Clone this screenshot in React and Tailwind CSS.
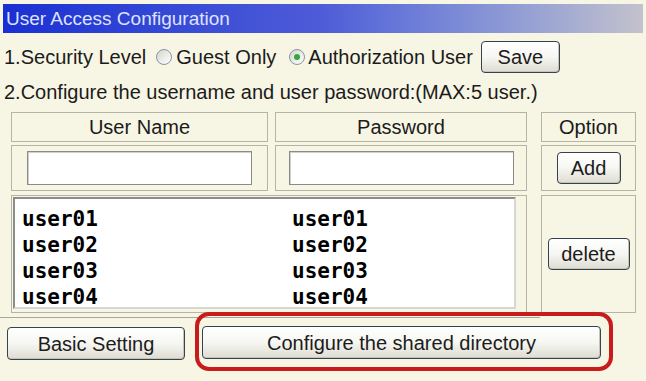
import React from "react";

const users = [
  { name: "user01", pass: "user01" },
  { name: "user02", pass: "user02" },
  { name: "user03", pass: "user03" },
  { name: "user04", pass: "user04" },
];

const XpButton = ({ children, className = "" }) => (
  <button
    className={`border border-[#34414f] rounded-[4px] bg-gradient-to-b from-white via-[#f6f6f2] to-[#dedcd2] text-[#1c1c1c] text-[20px] leading-none shadow-[inset_-1px_-1px_0_#c6c4b8] ${className}`}
  >
    {children}
  </button>
);

const Radio = ({ checked }) => (
  <span className="w-[16px] h-[16px] rounded-full border border-[#8596a6] bg-gradient-to-br from-[#d6d6ce] to-white flex items-center justify-center">
    {checked && <span className="w-[6px] h-[6px] rounded-full bg-[#3aa53a]" />}
  </span>
);

const cell = "border border-[#b6b4a4] flex items-center justify-center";

export default function App() {
  return (
    <div className="w-[646px] h-[381px] overflow-hidden bg-[#f7f5e4] text-[#1b1b1b] font-['Liberation_Sans',Arial,sans-serif]">
      <div className="mx-[3px] mt-[4px] h-[29px] pl-[3px] bg-gradient-to-r from-[#1a2fd2] via-[#4f5cd8] to-[#c3c2cc] text-[#dfe2ff] text-[19px] leading-[29px]">
        User Access Configuration
      </div>

      <div className="mt-[8px] h-[32px] pl-[4px] flex items-center text-[20px]">
        <span>1.Security Level</span>
        <span className="ml-[10px]">
          <Radio />
        </span>
        <span className="ml-[4px]">Guest Only</span>
        <span className="ml-[13px]">
          <Radio checked />
        </span>
        <span className="ml-[3px]">Authorization User</span>
        <XpButton className="ml-[8px] w-[79px] h-[32px]">Save</XpButton>
      </div>

      <div className="mt-[8px] h-[22px] pl-[4px] flex items-center text-[20px]">
        2.Configure the username and user password:(MAX:5 user.)
      </div>

      <div className="mt-[9px] w-[540px] pl-[11px] pb-[4px] border-b border-[#a9a79a]">
        <div className="w-[627px] grid grid-cols-[257px_252px_102px] gap-x-[7px] gap-y-[3px] grid-rows-[30px_46px_119px] text-[20px]">
          <div className={cell}>User Name</div>
          <div className={cell}>Password</div>
          <div className={`${cell} ml-[7px]`}>Option</div>

          <div className={cell}>
            <input className="w-[225px] h-[34px] bg-white border border-[#8a8a86] shadow-[inset_1px_1px_0_#cfcfcb]" />
          </div>
          <div className={cell}>
            <input type="password" className="w-[225px] h-[34px] bg-white border border-[#8a8a86] shadow-[inset_1px_1px_0_#cfcfcb]" />
          </div>
          <div className={`${cell} ml-[7px]`}>
            <XpButton className="w-[64px] h-[32px]">Add</XpButton>
          </div>

          <div className="col-span-2 border border-[#b6b4a4] mt-[1px] p-[1px] pr-[10px] pb-[3px]">
            <div className="h-full bg-white border-2 border-t-[#8c8c88] border-l-[#8c8c88] border-r-[#d8d8d2] border-b-[#d8d8d2] pl-[7px] pt-[7px] font-['DejaVu_Sans_Mono',monospace] font-bold text-[21px] leading-[26px] text-black">
              {users.map((u) => (
                <div key={u.name} className="grid grid-cols-[270px_1fr]">
                  <span>{u.name}</span>
                  <span>{u.pass}</span>
                </div>
              ))}
            </div>
          </div>
          <div className={`${cell} ml-[7px] mt-[1px]`}>
            <XpButton className="w-[82px] h-[32px]">delete</XpButton>
          </div>
        </div>
      </div>

      <div className="-mt-[6px] flex items-start">
        <XpButton className="ml-[7px] mt-[15px] w-[178px] h-[33px]">Basic Setting</XpButton>
        <div className="ml-[10px] border-4 border-[#c81c1c] rounded-[14px] pl-[3px] pr-[8px] pt-[10px] pb-[8px]">
          <XpButton className="w-[399px] h-[33px]">Configure the shared directory</XpButton>
        </div>
      </div>
    </div>
  );
}
